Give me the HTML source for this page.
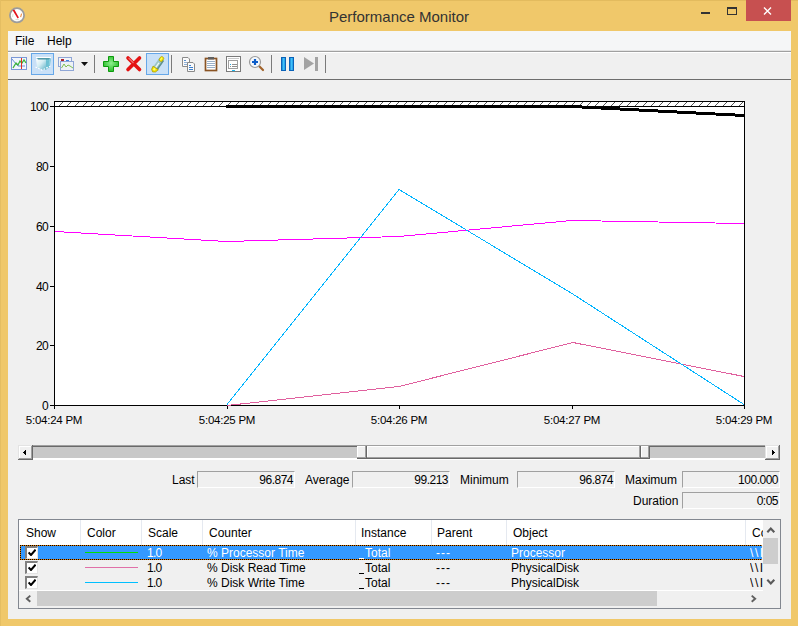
<!DOCTYPE html>
<html><head><meta charset="utf-8">
<style>
*{margin:0;padding:0;box-sizing:border-box}
html,body{width:798px;height:626px;overflow:hidden}
body{background:#F0C86A;position:relative;font-family:"Liberation Sans",sans-serif;font-size:12px;color:#000}
.a{position:absolute}
.t{position:absolute;white-space:nowrap;line-height:1}
</style></head><body>
<!-- top frame edge -->
<div class="a" style="left:0;top:0;width:798px;height:1px;background:#E3BB5E"></div>
<div class="a" style="left:0;top:0;width:1px;height:626px;background:#E5BE62"></div>
<!-- app icon -->
<svg class="a" style="left:0;top:0" width="30" height="30" viewBox="0 0 30 30">
  <defs><radialGradient id="gring" cx="0.5" cy="0.4" r="0.6"><stop offset="0.75" stop-color="#ffffff"/><stop offset="1" stop-color="#e8e8e8"/></radialGradient></defs>
  <circle cx="17" cy="15.3" r="7.1" fill="url(#gring)" stroke="#9c9c9c" stroke-width="1.8"/>
  <path d="M12.6 10.3 L14.3 9.6 L18.9 17.4 L17.6 18.4 Z" fill="#e3121c"/>
  <path d="M21.6 13.6 L20.6 17.2" stroke="#f08a3a" stroke-width="1.1"/>
  <path d="M13 14 L12.6 17 M15.5 19.5 L19 19.6" stroke="#c8d8c8" stroke-width="0.7"/>
</svg>
<!-- title -->
<div class="t" style="left:329px;top:9px;font-size:15px;color:#333">Performance Monitor</div>
<!-- window controls -->
<div class="a" style="left:701px;top:12px;width:9px;height:2px;background:#333"></div>
<div class="a" style="left:727px;top:7px;width:10px;height:8px;border:1px solid #333;border-top-width:2px"></div>
<div class="a" style="left:746px;top:0;width:45px;height:21px;background:#C75050"></div>
<svg class="a" style="left:763px;top:7px" width="9" height="8" viewBox="0 0 9 8">
  <path d="M1 0.5 L8 7.5 M8 0.5 L1 7.5" stroke="#fff" stroke-width="1.4"/>
</svg>

<!-- client area -->
<div class="a" style="left:8px;top:31px;width:783px;height:588px;background:#F0F0F0"></div>
<!-- menu bar -->
<div class="a" style="left:8px;top:31px;width:783px;height:19px;background:#F5F6F7"></div>
<div class="a" style="left:8px;top:50px;width:783px;height:1px;background:#E3E3E3"></div>
<div class="a" style="left:8px;top:51px;width:783px;height:1px;background:#A0A0A0"></div>
<div class="a" style="left:8px;top:52px;width:783px;height:1px;background:#FFFFFF"></div>
<div class="t" style="left:15px;top:35px">File</div>
<div class="t" style="left:47px;top:35px">Help</div>
<!-- toolbar bottom line -->
<div class="a" style="left:8px;top:79px;width:783px;height:1px;background:#6D6D6D"></div>

<!-- TOOLBAR -->
<svg class="a" style="left:0;top:0" width="798" height="80" viewBox="0 0 798 80">
  <defs>
    <linearGradient id="gcube" x1="0" y1="0" x2="1" y2="1">
      <stop offset="0" stop-color="#ffffff"/><stop offset="0.45" stop-color="#d4edf3"/><stop offset="1" stop-color="#5fb3c8"/>
    </linearGradient>
    <linearGradient id="gpause" x1="0" y1="0" x2="1" y2="0">
      <stop offset="0" stop-color="#0d6fc8"/><stop offset="0.5" stop-color="#3fc0f8"/><stop offset="1" stop-color="#1a8ee0"/>
    </linearGradient>
    <radialGradient id="gplus" cx="0.5" cy="0.45" r="0.6">
      <stop offset="0" stop-color="#8ef08e"/><stop offset="1" stop-color="#22b822"/>
    </radialGradient>
  </defs>
  <!-- icon 1: line graph -->
  <rect x="11.5" y="57.5" width="15" height="12" fill="#f2f6fc" stroke="#7b98d6" stroke-width="1"/>
  <path d="M12 59 L16 64 L18 66 L25 66" fill="none" stroke="#6f8fd8" stroke-width="1"/>
  <path d="M13 68 L16 63 L18 65 L20 61 L22 63 L24 60 L26 63" fill="none" stroke="#3cb43c" stroke-width="1.3"/>
  <rect x="21" y="58" width="1" height="11" fill="#e03020"/>
  <!-- icon 2: selected cube -->
  <rect x="31.5" y="53.5" width="22" height="21" fill="#c9e0f7" stroke="#66a7e8" stroke-width="1"/>
  <path d="M36 59 L46 59 L46 69.8 L43 70 L37 67.2 Z" fill="url(#gcube)"/>
  <path d="M46 59 L50.8 58.2 L49.8 67 L46 69.8 Z" fill="#6cc0d2"/>
  <path d="M46.5 60 L49.8 59.5 L49.2 65" stroke="#8fd3e0" stroke-width="1" fill="none"/>
  <path d="M37 58 L50 58 L49 59.6 L38 59.6 Z" fill="#3f8f9f"/>
  <path d="M36 57.5 H51" stroke="#ffffff" stroke-width="1.2"/>
  <path d="M35.5 67 L42 70.2 L50.5 66" fill="none" stroke="#ffffff" stroke-width="1.2" stroke-dasharray="1.6 1.4"/>
  <!-- icon 3: change graph type -->
  <rect x="58.5" y="57.5" width="13" height="9" fill="#f2f4f8" stroke="#8fa6d6" stroke-width="1"/>
  <rect x="61" y="59" width="3" height="2" fill="#b0202a"/>
  <rect x="66" y="60" width="3" height="1" fill="#4080e0"/>
  <rect x="60.5" y="61.5" width="13" height="9" fill="#eef2f6" stroke="#8fa6d6" stroke-width="1"/>
  <path d="M61.5 68 L64 64 L66 67 L68 65 L70 66 L73 68" fill="none" stroke="#7fbf50" stroke-width="1"/>
  <path d="M81 62 L88 62 L84.5 66 Z" fill="#111"/>
  <!-- separators -->
  <rect x="94" y="55" width="1" height="18" fill="#7a7a7a"/>
  <rect x="171" y="55" width="1" height="18" fill="#7a7a7a"/>
  <rect x="271" y="55" width="1" height="18" fill="#7a7a7a"/>
  <rect x="325" y="55" width="1" height="18" fill="#7a7a7a"/>
  <!-- add (green plus) -->
  <path d="M108.5 56.5 H113.5 V61.5 H118.5 V66.5 H113.5 V71.5 H108.5 V66.5 H103.5 V61.5 H108.5 Z" fill="url(#gplus)" stroke="#0d9a0d" stroke-width="1"/>
  <!-- delete (red x) -->
  <path d="M128 58 L139.5 69.5 M139.5 58 L128 69.5" stroke="#e41212" stroke-width="3.6" stroke-linecap="round"/>
  <path d="M128.6 58 L133.5 63" stroke="#f07070" stroke-width="1.2"/>
  <!-- highlight (selected pencil) -->
  <rect x="146.5" y="53.5" width="22" height="21" fill="#c9e0f7" stroke="#66a7e8" stroke-width="1"/>
  <g transform="translate(158.3,64.2) rotate(-55)">
    <rect x="-5" y="-2.7" width="11" height="5.4" fill="#9cc6c6"/>
    <rect x="-5" y="1.4" width="11" height="1.4" fill="#5f8f8f"/>
    <rect x="-4.5" y="-0.9" width="6" height="1.3" fill="#eef8f8"/>
    <rect x="3.5" y="-2.2" width="5" height="3.6" rx="1.4" fill="#f2e200" stroke="#a89a00" stroke-width="0.6"/>
    <rect x="4.5" y="-1.2" width="3" height="1.2" fill="#ffff60"/>
    <path d="M-4.5 -3.2 L-4.5 3.2 L-8 2.2 L-9.6 -0.2 L-8 -2.6 Z" fill="#f2e000" stroke="#9c8e00" stroke-width="0.6"/>
    <circle cx="-6.5" cy="-0.3" r="1.2" fill="#ffff70"/>
  </g>
  <!-- copy properties -->
  <path d="M182.5 57.5 H188 L189.5 59 V66.5 H182.5 Z" fill="#fafafa" stroke="#8a8a8a" stroke-width="1"/>
  <rect x="184" y="60" width="2" height="1" fill="#5a8fd0"/>
  <rect x="184" y="62" width="4" height="1" fill="#8fb0d8"/>
  <rect x="184" y="64" width="4" height="1" fill="#8fb0d8"/>
  <path d="M187.5 62.5 H193 L194.5 64 V71.5 H187.5 Z" fill="#fafafa" stroke="#8a8a8a" stroke-width="1"/>
  <rect x="189" y="65" width="2" height="1" fill="#3a7fd0"/>
  <rect x="189" y="67" width="4" height="1" fill="#3a7fd0"/>
  <rect x="189" y="69" width="4" height="1" fill="#3a7fd0"/>
  <!-- paste clipboard -->
  <rect x="205.5" y="58.5" width="11" height="12" fill="#ffffff" stroke="#8a5424" stroke-width="1.7"/>
  <rect x="208" y="57" width="6" height="2.5" fill="#606060"/>
  <rect x="207" y="61" width="8" height="1" fill="#9ab0c8"/>
  <rect x="207" y="63" width="8" height="1" fill="#9ab0c8"/>
  <rect x="207" y="65" width="8" height="1" fill="#9ab0c8"/>
  <rect x="207" y="67" width="8" height="1" fill="#9ab0c8"/>
  <!-- properties -->
  <rect x="226.5" y="56.5" width="14" height="15" fill="#ffffff" stroke="#7a7a7a" stroke-width="1"/>
  <rect x="228" y="58" width="11" height="1" fill="#c8c8c8"/>
  <rect x="228.5" y="60.5" width="9" height="8" fill="none" stroke="#a0a0a0" stroke-width="1"/>
  <rect x="230" y="64" width="1" height="1" fill="#20a8e8"/>
  <rect x="232" y="64" width="5" height="1" fill="#909090"/>
  <rect x="230" y="66" width="1" height="1" fill="#909090"/>
  <rect x="232" y="66" width="5" height="1" fill="#909090"/>
  <rect x="232" y="70" width="3" height="1" fill="#20b8f0"/>
  <!-- zoom -->
  <path d="M259 66 L263 70" stroke="#a0622a" stroke-width="2.2" stroke-linecap="round"/>
  <circle cx="255" cy="62" r="5.5" fill="#f4f8fc" stroke="#9a9a9a" stroke-width="1.2"/>
  <path d="M255 59 V65 M252 62 H258" stroke="#0c5cc8" stroke-width="2.2"/>
  <!-- pause -->
  <rect x="281.5" y="57.5" width="4" height="13" fill="url(#gpause)" stroke="#0a62b8" stroke-width="1"/>
  <rect x="289.5" y="57.5" width="4" height="13" fill="url(#gpause)" stroke="#0a62b8" stroke-width="1"/>
  <!-- next (disabled) -->
  <path d="M304 57 L314 63.5 L304 70 Z" fill="#a3a3a3"/>
  <rect x="315" y="57" width="3" height="14" fill="#a3a3a3"/>
</svg>


<!-- GRAPH -->
<svg class="a" style="left:0;top:0" width="798" height="626" viewBox="0 0 798 626">
  <defs>
    <pattern id="hatch" patternUnits="userSpaceOnUse" x="3" y="102" width="8" height="4">
      <rect x="0" y="3" width="1" height="1" fill="#555"/>
      <rect x="1" y="2" width="1" height="1" fill="#555"/>
      <rect x="2" y="1" width="1" height="1" fill="#555"/>
      <rect x="3" y="0" width="1" height="1" fill="#555"/>
    </pattern>
  </defs>
  <rect x="54" y="101" width="691" height="305" fill="#000"/>
  <rect x="55" y="102" width="689" height="303" fill="#fff"/>
  <rect x="55" y="102" width="689" height="4" fill="url(#hatch)"/>
  <g shape-rendering="crispEdges" fill="#000">
    <rect x="55" y="106" width="689" height="1"/>
    <rect x="50" y="106" width="4" height="1"/>
    <rect x="50" y="166" width="4" height="1"/>
    <rect x="50" y="226" width="4" height="1"/>
    <rect x="50" y="286" width="4" height="1"/>
    <rect x="50" y="345" width="4" height="1"/>
    <rect x="50" y="405" width="4" height="1"/>
    <rect x="54" y="406" width="1" height="3"/>
    <rect x="227" y="406" width="1" height="3"/>
    <rect x="399" y="406" width="1" height="3"/>
    <rect x="572" y="406" width="1" height="3"/>
    <rect x="744" y="406" width="1" height="3"/>
  </g>
  <g fill="none" shape-rendering="crispEdges">
    <polyline points="55,231.5 227,241.5 399,236.5 572,220.5 744,223.5" stroke="#FF00FF" stroke-width="1"/>
    <polyline points="227,405.5 399,386.5 573,342.5 744,376.5" stroke="#E0609E" stroke-width="1"/>
    <polyline points="227,404.5 399,189.5 572,293.5 744,404.5" stroke="#00B4FF" stroke-width="1"/>
    <polyline points="226,106.5 572,106.5 744,115.5" stroke="#000" stroke-width="3"/>
  </g>
</svg>
<div class="t" style="left:26px;top:101px;width:22px;text-align:right;letter-spacing:-0.7px">100</div>
<div class="t" style="left:26px;top:161px;width:22px;text-align:right;letter-spacing:-0.7px">80</div>
<div class="t" style="left:26px;top:221px;width:22px;text-align:right;letter-spacing:-0.7px">60</div>
<div class="t" style="left:26px;top:281px;width:22px;text-align:right;letter-spacing:-0.7px">40</div>
<div class="t" style="left:26px;top:340px;width:22px;text-align:right;letter-spacing:-0.7px">20</div>
<div class="t" style="left:26px;top:400px;width:22px;text-align:right;letter-spacing:-0.7px">0</div>
<div class="t" style="left:-6px;top:414.5px;width:120px;text-align:center;font-size:11.5px;letter-spacing:-0.25px">5:04:24 PM</div>
<div class="t" style="left:167px;top:414.5px;width:120px;text-align:center;font-size:11.5px;letter-spacing:-0.25px">5:04:25 PM</div>
<div class="t" style="left:339px;top:414.5px;width:120px;text-align:center;font-size:11.5px;letter-spacing:-0.25px">5:04:26 PM</div>
<div class="t" style="left:512px;top:414.5px;width:120px;text-align:center;font-size:11.5px;letter-spacing:-0.25px">5:04:27 PM</div>
<div class="t" style="left:684px;top:414.5px;width:120px;text-align:center;font-size:11.5px;letter-spacing:-0.25px">5:04:29 PM</div>


<!-- SCROLL + STATS -->
<!-- range scrollbar -->
<svg class="a" style="left:0;top:0" width="798" height="470" shape-rendering="crispEdges"><rect x="33" y="445" width="732" height="1" fill="#A0A0A0"/><rect x="33" y="446" width="732" height="1" fill="#696969"/><rect x="33" y="447" width="732" height="11" fill="#C8C8C8"/><rect x="33" y="458" width="732" height="2" fill="#FFFFFF"/><rect x="18" y="445" width="15" height="15" fill="#F0F0F0"/><rect x="18" y="445" width="14" height="1" fill="#E3E3E3"/><rect x="18" y="445" width="1" height="14" fill="#E3E3E3"/><rect x="19" y="446" width="12" height="1" fill="#FFFFFF"/><rect x="19" y="446" width="1" height="12" fill="#FFFFFF"/><rect x="31" y="446" width="1" height="13" fill="#A0A0A0"/><rect x="19" y="458" width="13" height="1" fill="#A0A0A0"/><rect x="32" y="445" width="1" height="15" fill="#696969"/><rect x="18" y="459" width="15" height="1" fill="#696969"/><rect x="765" y="445" width="15" height="15" fill="#F0F0F0"/><rect x="765" y="445" width="14" height="1" fill="#E3E3E3"/><rect x="765" y="445" width="1" height="14" fill="#E3E3E3"/><rect x="766" y="446" width="12" height="1" fill="#FFFFFF"/><rect x="766" y="446" width="1" height="12" fill="#FFFFFF"/><rect x="778" y="446" width="1" height="13" fill="#A0A0A0"/><rect x="766" y="458" width="13" height="1" fill="#A0A0A0"/><rect x="779" y="445" width="1" height="15" fill="#696969"/><rect x="765" y="459" width="15" height="1" fill="#696969"/><rect x="23" y="452" width="1" height="1" fill="#000"/><rect x="24" y="451" width="1" height="3" fill="#000"/><rect x="25" y="450" width="1" height="5" fill="#000"/><rect x="774" y="452" width="1" height="1" fill="#000"/><rect x="773" y="451" width="1" height="3" fill="#000"/><rect x="772" y="450" width="1" height="5" fill="#000"/><rect x="357" y="445" width="10" height="14" fill="#F0F0F0"/><rect x="357" y="445" width="10" height="1" fill="#A0A0A0"/><rect x="357" y="446" width="9" height="1" fill="#FFFFFF"/><rect x="357" y="446" width="1" height="12" fill="#FFFFFF"/><rect x="365" y="446" width="1" height="12" fill="#A0A0A0"/><rect x="357" y="457" width="9" height="1" fill="#A0A0A0"/><rect x="366" y="446" width="1" height="13" fill="#696969"/><rect x="357" y="458" width="10" height="1" fill="#696969"/><rect x="367" y="445" width="274" height="14" fill="#F0F0F0"/><rect x="367" y="445" width="274" height="1" fill="#A0A0A0"/><rect x="367" y="446" width="273" height="1" fill="#FFFFFF"/><rect x="367" y="446" width="1" height="12" fill="#FFFFFF"/><rect x="639" y="446" width="1" height="12" fill="#A0A0A0"/><rect x="367" y="457" width="273" height="1" fill="#A0A0A0"/><rect x="640" y="446" width="1" height="13" fill="#696969"/><rect x="367" y="458" width="274" height="1" fill="#696969"/><rect x="641" y="445" width="9" height="14" fill="#F0F0F0"/><rect x="641" y="445" width="9" height="1" fill="#A0A0A0"/><rect x="641" y="446" width="8" height="1" fill="#FFFFFF"/><rect x="641" y="446" width="1" height="12" fill="#FFFFFF"/><rect x="648" y="446" width="1" height="12" fill="#A0A0A0"/><rect x="641" y="457" width="8" height="1" fill="#A0A0A0"/><rect x="649" y="446" width="1" height="13" fill="#696969"/><rect x="641" y="458" width="9" height="1" fill="#696969"/></svg>
<!-- stats -->
<div class="t" style="left:172px;top:474px">Last</div>
<div class="a" style="left:197px;top:471px;width:98px;height:17px;border-top:1px solid #A0A0A0;border-left:1px solid #A0A0A0;border-right:1px solid #FFFFFF;border-bottom:1px solid #FFFFFF"></div>
<div class="t" style="left:197px;top:474px;width:96px;text-align:right;letter-spacing:-0.5px">96.874</div>
<div class="t" style="left:305px;top:474px">Average</div>
<div class="a" style="left:352px;top:471px;width:98px;height:17px;border-top:1px solid #A0A0A0;border-left:1px solid #A0A0A0;border-right:1px solid #FFFFFF;border-bottom:1px solid #FFFFFF"></div>
<div class="t" style="left:352px;top:474px;width:96px;text-align:right;letter-spacing:-0.5px">99.213</div>
<div class="t" style="left:460px;top:474px">Minimum</div>
<div class="a" style="left:517px;top:471px;width:98px;height:17px;border-top:1px solid #A0A0A0;border-left:1px solid #A0A0A0;border-right:1px solid #FFFFFF;border-bottom:1px solid #FFFFFF"></div>
<div class="t" style="left:517px;top:474px;width:96px;text-align:right;letter-spacing:-0.5px">96.874</div>
<div class="t" style="left:625px;top:474px">Maximum</div>
<div class="a" style="left:682px;top:471px;width:98px;height:17px;border-top:1px solid #A0A0A0;border-left:1px solid #A0A0A0;border-right:1px solid #FFFFFF;border-bottom:1px solid #FFFFFF"></div>
<div class="t" style="left:682px;top:474px;width:96px;text-align:right;letter-spacing:-0.5px">100.000</div>
<div class="t" style="left:633px;top:495px">Duration</div>
<div class="a" style="left:682px;top:492px;width:98px;height:17px;border-top:1px solid #A0A0A0;border-left:1px solid #A0A0A0;border-right:1px solid #FFFFFF;border-bottom:1px solid #FFFFFF"></div>
<div class="t" style="left:682px;top:495px;width:96px;text-align:right;letter-spacing:-0.5px">0:05</div>


<!-- LIST -->
<div class="a" style="left:18px;top:519px;width:763px;height:90px;border:1px solid #828790;background:#F0F0F0"></div>
<div class="a" style="left:19px;top:520px;width:744px;height:25px;background:#FFFFFF"></div>
<div class="a" style="left:80px;top:520px;width:1px;height:25px;background:#E5E9F0"></div>
<div class="a" style="left:141px;top:520px;width:1px;height:25px;background:#E5E9F0"></div>
<div class="a" style="left:202px;top:520px;width:1px;height:25px;background:#E5E9F0"></div>
<div class="a" style="left:355px;top:520px;width:1px;height:25px;background:#E5E9F0"></div>
<div class="a" style="left:431px;top:520px;width:1px;height:25px;background:#E5E9F0"></div>
<div class="a" style="left:506px;top:520px;width:1px;height:25px;background:#E5E9F0"></div>
<div class="a" style="left:745px;top:520px;width:1px;height:25px;background:#E5E9F0"></div>
<div class="t" style="left:26px;top:527px">Show</div>
<div class="t" style="left:87px;top:527px">Color</div>
<div class="t" style="left:148px;top:527px">Scale</div>
<div class="t" style="left:209px;top:527px">Counter</div>
<div class="t" style="left:361px;top:527px">Instance</div>
<div class="t" style="left:437px;top:527px">Parent</div>
<div class="t" style="left:513px;top:527px">Object</div>
<div class="t" style="left:752px;top:527px">Co</div>
<div class="a" style="left:20px;top:545px;width:742px;height:15px;background:#3399FF"></div>
<div class="a" style="left:20px;top:545px;width:742px;height:1px;background:repeating-linear-gradient(90deg,#000 0 1px,#E07800 1px 2px)"></div>
<div class="a" style="left:20px;top:559px;width:742px;height:1px;background:repeating-linear-gradient(90deg,#000 0 1px,#E07800 1px 2px)"></div>
<div class="a" style="left:20px;top:545px;width:1px;height:15px;background:repeating-linear-gradient(180deg,#000 0 1px,#E07800 1px 2px)"></div>
<div class="a" style="left:25px;top:546px;width:13px;height:13px;background:#fff;border-top:2px solid #808080;border-left:2px solid #808080;border-right:1px solid #E3E3E3;border-bottom:1px solid #E3E3E3"></div>
<svg class="a" style="left:28px;top:549px" width="8" height="7"><path d="M0.6 3.4 L3 6 L7.6 0.6" fill="none" stroke="#000" stroke-width="2"/></svg>
<div class="a" style="left:85px;top:552px;width:53px;height:1px;background:#00E000"></div>
<div class="t" style="left:147px;top:547px;color:#FFFFFF;letter-spacing:-0.7px">1.0</div>
<div class="t" style="left:207px;top:547px;color:#FFFFFF">% Processor Time</div>
<div class="a" style="left:359px;top:558px;width:5px;height:1px;background:#FFFFFF"></div><div class="t" style="left:365px;top:547px;color:#FFFFFF">Total</div>
<div class="t" style="left:436px;top:547px;color:#FFFFFF;letter-spacing:1px">---</div>
<div class="t" style="left:511px;top:547px;color:#FFFFFF">Processor</div>
<div class="t" style="left:750px;top:547px;color:#FFFFFF;width:13px;overflow:hidden;letter-spacing:1.6px">\\I</div>
<div class="a" style="left:25px;top:561px;width:13px;height:13px;background:#fff;border-top:2px solid #808080;border-left:2px solid #808080;border-right:1px solid #E3E3E3;border-bottom:1px solid #E3E3E3"></div>
<svg class="a" style="left:28px;top:564px" width="8" height="7"><path d="M0.6 3.4 L3 6 L7.6 0.6" fill="none" stroke="#000" stroke-width="2"/></svg>
<div class="a" style="left:85px;top:567px;width:53px;height:1px;background:#E070A8"></div>
<div class="t" style="left:147px;top:562px;color:#000;letter-spacing:-0.7px">1.0</div>
<div class="t" style="left:207px;top:562px;color:#000">% Disk Read Time</div>
<div class="a" style="left:359px;top:573px;width:5px;height:1px;background:#000"></div><div class="t" style="left:365px;top:562px;color:#000">Total</div>
<div class="t" style="left:436px;top:562px;color:#000;letter-spacing:1px">---</div>
<div class="t" style="left:511px;top:562px;color:#000">PhysicalDisk</div>
<div class="t" style="left:750px;top:562px;color:#000;width:13px;overflow:hidden;letter-spacing:1.6px">\\I</div>
<div class="a" style="left:25px;top:576px;width:13px;height:13px;background:#fff;border-top:2px solid #808080;border-left:2px solid #808080;border-right:1px solid #E3E3E3;border-bottom:1px solid #E3E3E3"></div>
<svg class="a" style="left:28px;top:579px" width="8" height="7"><path d="M0.6 3.4 L3 6 L7.6 0.6" fill="none" stroke="#000" stroke-width="2"/></svg>
<div class="a" style="left:85px;top:582px;width:53px;height:1px;background:#00BFFF"></div>
<div class="t" style="left:147px;top:577px;color:#000;letter-spacing:-0.7px">1.0</div>
<div class="t" style="left:207px;top:577px;color:#000">% Disk Write Time</div>
<div class="a" style="left:359px;top:588px;width:5px;height:1px;background:#000"></div><div class="t" style="left:365px;top:577px;color:#000">Total</div>
<div class="t" style="left:436px;top:577px;color:#000;letter-spacing:1px">---</div>
<div class="t" style="left:511px;top:577px;color:#000">PhysicalDisk</div>
<div class="t" style="left:750px;top:577px;color:#000;width:13px;overflow:hidden;letter-spacing:1.6px">\\I</div>
<div class="a" style="left:763px;top:520px;width:17px;height:71px;background:#F0F0F0"></div>
<div class="a" style="left:763px;top:538px;width:15px;height:26px;background:#CDCDCD"></div>
<svg class="a" style="left:766px;top:526px" width="10" height="7"><path d="M1.3 6.3 L4.8 2.6 L8.3 6.3" fill="none" stroke="#5a5a5a" stroke-width="2.1"/></svg>
<svg class="a" style="left:766px;top:578px" width="10" height="7"><path d="M1.3 1.8 L4.8 5.5 L8.3 1.8" fill="none" stroke="#5a5a5a" stroke-width="2.1"/></svg>
<div class="a" style="left:19px;top:590px;width:744px;height:1px;background:#FFFFFF"></div>
<div class="a" style="left:19px;top:591px;width:761px;height:17px;background:#F0F0F0"></div>
<div class="a" style="left:37px;top:591px;width:620px;height:15px;background:#CDCDCD"></div>
<svg class="a" style="left:24px;top:594px" width="8" height="10"><path d="M6.3 1.6 L2.8 4.7 L6.3 7.8" fill="none" stroke="#606060" stroke-width="1.9"/></svg>
<svg class="a" style="left:750px;top:594px" width="8" height="10"><path d="M1.7 1.6 L5.2 4.7 L1.7 7.8" fill="none" stroke="#606060" stroke-width="1.9"/></svg>

</body></html>
